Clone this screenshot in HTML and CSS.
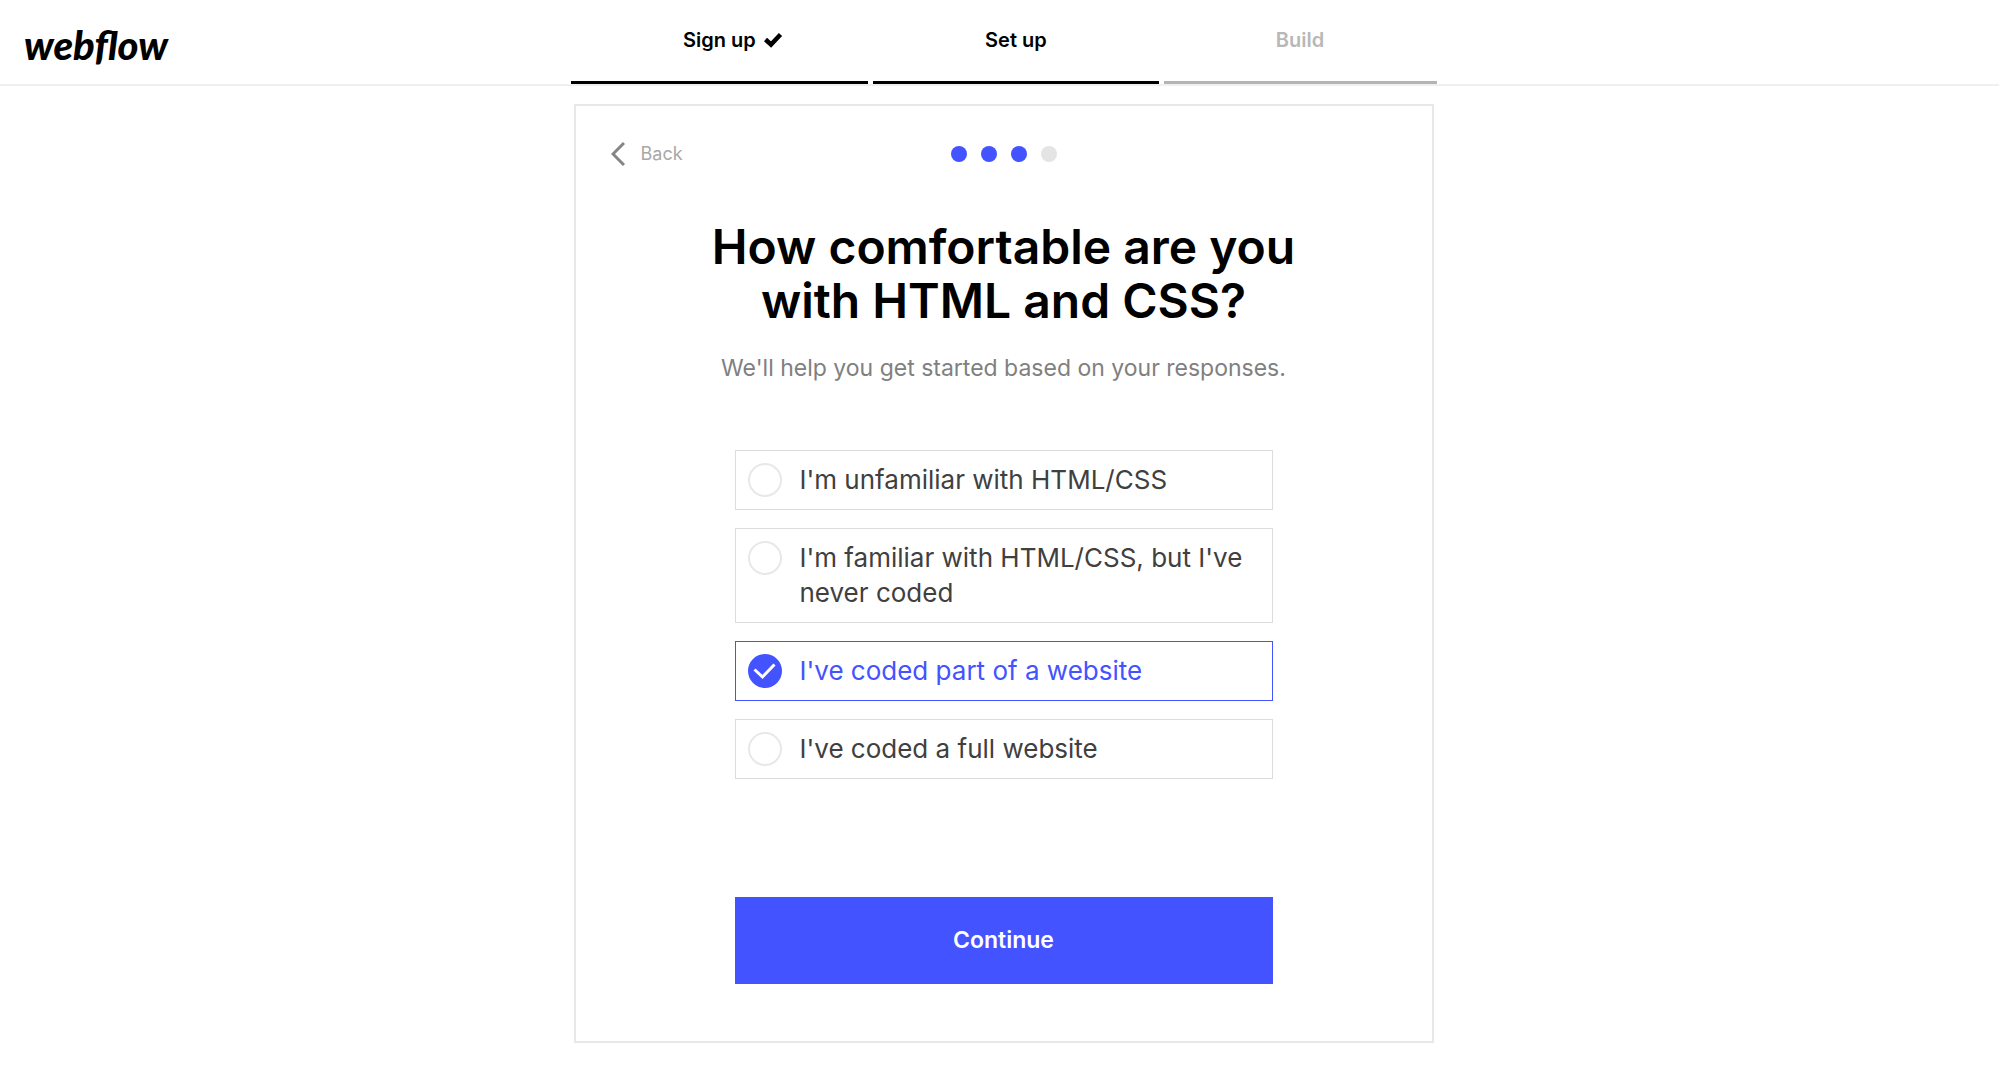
FILE: index.html
```html
<!DOCTYPE html>
<html lang="en">

<head>
    <meta charset="UTF-8">
    <meta name="viewport" content="width=device-width, initial-scale=1.0">
    <title>Webflow - Set up</title>
    <link rel="stylesheet" href="styles.css">
</head>

<body>

    <header class="header">
        <a href="#" class="logo">webflow</a>
        <ol class="steps">
            <li class="step">Sign up
                <svg class="step-check" viewBox="0 0 18 14" aria-hidden="true">
                    <path d="M1.500 6.500 L7 11.500 L16.500 1.500" fill="none" stroke="currentColor" stroke-width="4.500" />
                </svg>
            </li>
            <li class="step" aria-current="step">Set up</li>
            <li class="step step-todo">Build</li>
        </ol>
    </header>

    <main class="page">
        <form class="card">
            <div class="card-top">
                <a href="#" class="back">
                    <svg class="chevron" viewBox="0 0 14 24" aria-hidden="true">
                        <path d="M13 1 L2 12 L13 23" fill="none" stroke="currentColor" stroke-width="3" />
                    </svg>
                    Back
                </a>
                <div class="dots">
                    <span class="dot active"></span>
                    <span class="dot active"></span>
                    <span class="dot active"></span>
                    <span class="dot"></span>
                </div>
            </div>

            <h1 class="title">How comfortable are you<br>with HTML and CSS?</h1>
            <p class="subtitle">We'll help you get started based on your responses.</p>

            <div class="options">
                <label class="option">
                    <input type="radio" class="radio" name="skill" value="unfamiliar">
                    <span>I'm unfamiliar with HTML/CSS</span>
                </label>
                <label class="option">
                    <input type="radio" class="radio" name="skill" value="familiar">
                    <span>I'm familiar with HTML/CSS, but I've never coded</span>
                </label>
                <label class="option">
                    <input type="radio" class="radio" name="skill" value="part" checked>
                    <span>I've coded part of a website</span>
                </label>
                <label class="option">
                    <input type="radio" class="radio" name="skill" value="full">
                    <span>I've coded a full website</span>
                </label>
            </div>

            <button type="submit" class="continue">Continue</button>
        </form>
    </main>

</body>

</html>
```

FILE: styles.css
```css
* {
    box-sizing: border-box;
}

body {
    margin: 0;
    font-family: Inter, "Liberation Sans", sans-serif;
    background-color: #fff;
    color: #000;
}

.header {
    display: grid;
    grid-template-columns: 1fr minmax(0, 866px) 1fr;
    border-bottom: 2px solid #f0f0f0;
    padding-left: 8px;
}

.logo {
    padding: 20px 16px 14px;
    font-family: Lato, sans-serif;
    font-size: 40px;
    line-height: 50px;
    font-weight: 900;
    font-style: italic;
    color: #000;
    text-decoration: none;
}

.steps {
    display: grid;
    grid-template-columns: 12fr 11.5fr 11fr;
    gap: 5px;
    margin: 0;
    padding: 0;
    list-style: none;
}

.step {
    display: flex;
    justify-content: center;
    gap: 8px;
    padding-top: 28px;
    border-bottom: 3px solid #000;
    font-size: 20px;
    line-height: 24px;
    font-weight: 600;
}

.step-todo {
    color: #b8b8b8;
    border-color: #b4b4b4;
}

/* hangs past the label so the text stays centered */
.step-check {
    width: 18px;
    height: 24px;
    margin-right: -26px;
    overflow: visible;
}

.page {
    display: flex;
    justify-content: center;
    padding: 18px 0 28px 8px;
}

.card {
    width: 100%;
    max-width: 860px;
    padding: 36px 35px 57px;
    border: 2px solid #e8e8e8;
}

.card-top {
    display: grid;
    grid-template-columns: 1fr auto 1fr;
    align-items: center;
}

.back {
    display: flex;
    align-items: center;
    gap: 16px;
    font-size: 18px;
    line-height: 24px;
    color: #a8a8a8;
    text-decoration: none;
}

.chevron {
    width: 14px;
    height: 24px;
    color: #858585;
}

.dots {
    display: flex;
    gap: 14px;
}

.dot {
    width: 16px;
    height: 16px;
    border-radius: 50%;
    background-color: #e4e4e4;
}

.active {
    background-color: #4353ff;
}

.title {
    margin: 54px 0 0;
    font-size: 48px;
    line-height: 54px;
    font-weight: 600;
    text-align: center;
}

.subtitle {
    margin: 24px 0 0;
    font-size: 23px;
    line-height: 32px;
    color: #808080;
    text-align: center;
}

.options {
    display: flex;
    flex-direction: column;
    gap: 18px;
    max-width: 538px;
    margin: 66px auto 0;
}

.option {
    display: flex;
    align-items: flex-start;
    gap: 18px;
    padding: 11px 12px 12px;
    border: 1px solid #dcdcdc;
    font-size: 26px;
    line-height: 35px;
    color: #404040;
    cursor: pointer;
}

.option:has(.radio:checked) {
    border-color: #4353ff;
    color: #4353ff;
}

.radio {
    appearance: none;
    flex-shrink: 0;
    width: 34px;
    height: 34px;
    margin: 1px 0 0;
    border: 2px solid #e8e8e8;
    border-radius: 50%;
}

.radio:checked {
    border: none;
    background: #4353ff url("data:image/svg+xml,%3Csvg xmlns='http://www.w3.org/2000/svg' viewBox='0 0 34 34'%3E%3Cpath d='M6.500 15.500 L14.500 23 L26.500 10.500' fill='none' stroke='white' stroke-width='3'/%3E%3C/svg%3E");
}

.continue {
    display: block;
    width: 100%;
    max-width: 538px;
    margin: 118px auto 0;
    padding: 28px;
    border: none;
    background-color: #4353ff;
    font-family: inherit;
    font-size: 23px;
    line-height: 31px;
    font-weight: 600;
    color: #fff;
    cursor: pointer;
}
```
